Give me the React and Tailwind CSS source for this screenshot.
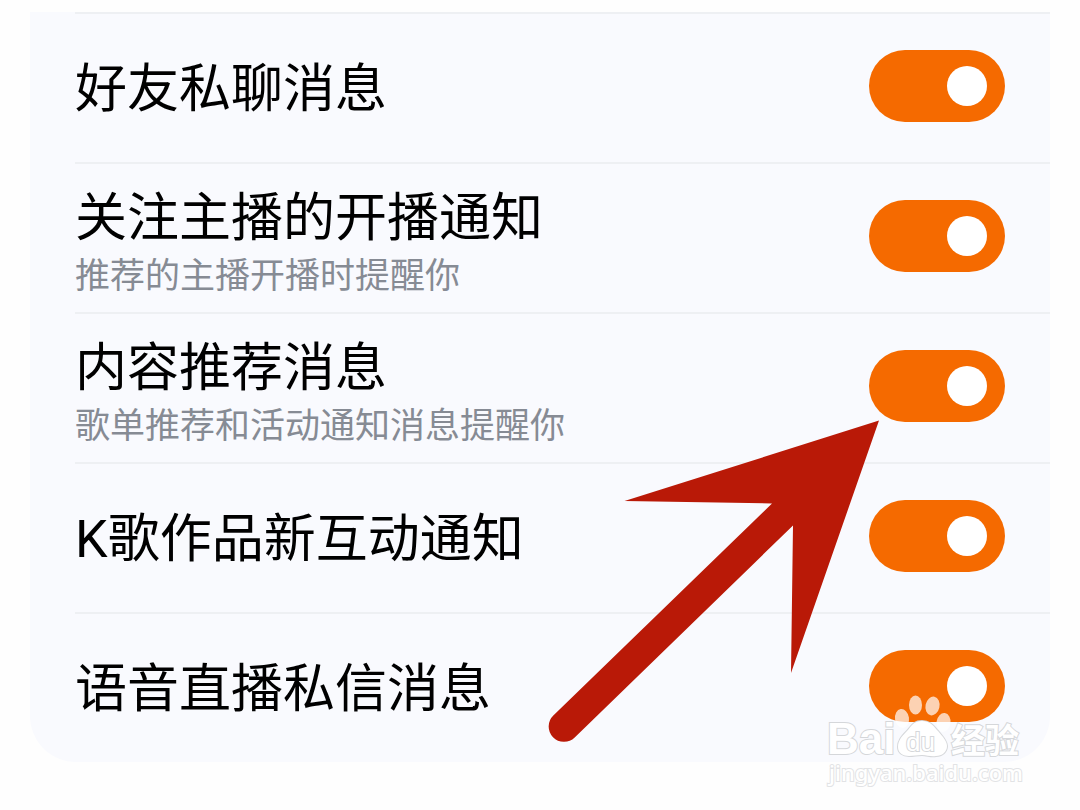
import React, { useState } from 'react';

const initialSettings = [
  { id: 'friendChat', title: '好友私聊消息', enabled: true },
  { id: 'liveStart', title: '关注主播的开播通知', description: '推荐的主播开播时提醒你', enabled: true },
  { id: 'recommend', title: '内容推荐消息', description: '歌单推荐和活动通知消息提醒你', enabled: true },
  { id: 'karaoke', title: 'K歌作品新互动通知', enabled: true },
  { id: 'voiceLive', title: '语音直播私信消息', enabled: true },
];

const SettingRow = ({ setting, onToggle }) => {
  return (
    <li className="flex min-h-[150px] items-center justify-between border-t-2 border-[#eef0f3] pr-[45px] pb-1">
      <label
        htmlFor={setting.id}
        className={setting.description ? 'flex flex-col pt-5' : 'flex flex-col pt-2'}
      >
        <span className="text-[52px] leading-[60px] text-black">{setting.title}</span>
        {setting.description && (
          <span className="mt-0.5 text-[35px] leading-[52px] text-[#868b94]">{setting.description}</span>
        )}
      </label>
      <input
        type="checkbox"
        role="switch"
        id={setting.id}
        name={setting.id}
        checked={setting.enabled}
        onChange={() => onToggle(setting.id)}
        className="flex h-[72px] w-[136px] shrink-0 cursor-pointer appearance-none items-center rounded-full bg-gray-300 px-[18px] before:size-10 before:rounded-full before:bg-white checked:justify-end checked:bg-[#f56a00]"
      />
    </li>
  );
};

const Arrow = () => (
  <svg
    className="pointer-events-none absolute top-[408px] right-[170px] h-[324px] w-[334px]"
    viewBox="546 420 334 324"
    fill="#b91907"
    aria-hidden="true"
  >
    <path d="M879 420.5 L624.5 501 L772 503.5 L553.3 715.5 A15.3 15.3 0 0 0 574.7 737.5 L793 525.5 L791 673 Z" />
  </svg>
);

const Watermark = () => (
  <svg
    className="pointer-events-none absolute -bottom-[28px] right-[24px] h-[100px] w-[202px]"
    viewBox="824 690 202 100"
    fontFamily="'Liberation Sans', 'Noto Sans CJK SC', sans-serif"
    fill="#ffffff"
    stroke="#d5d7da"
    strokeWidth="2"
    paintOrder="stroke"
  >
    <g stroke="none" fillOpacity="0.7">
      <ellipse cx="902" cy="718.5" rx="7" ry="9.5" transform="rotate(-8 902 718.5)" />
      <ellipse cx="915.5" cy="705" rx="6.5" ry="9.5" />
      <ellipse cx="932.5" cy="706" rx="7" ry="9.5" transform="rotate(12 932.5 706)" />
      <ellipse cx="943.5" cy="722.5" rx="7" ry="9.5" transform="rotate(8 943.5 722.5)" />
    </g>
    <text x="827" y="754" fontSize="44" fontWeight="700">Bai</text>
    <path d="M922 721 C913 721 911 727 907 731 C901 737 898 741 898 747 C898 753 903 756 909 756 C914 756 917 755 922 755 C927 755 931 757 936 756 C942 756 947 752 947 746 C947 741 943 737 938 731 C934 727 931 721 922 721 Z" />
    <text x="906" y="751" fontSize="26" fontWeight="400">du</text>
    <text x="951" y="753" fontSize="34" fontWeight="700">经验</text>
    <text x="829" y="781" fontSize="22" fontWeight="500" stroke="#e2e3e5" fontFamily="'Noto Sans', sans-serif">jingyan.baidu.com</text>
  </svg>
);

const App = () => {
  const [settings, setSettings] = useState(initialSettings);

  const handleToggle = (id) => {
    setSettings(prev =>
      prev.map(item => (item.id === id ? { ...item, enabled: !item.enabled } : item))
    );
  };

  return (
    <main className="min-h-screen bg-[#fefefe] px-[30px] pt-3 pb-12 font-[Roboto,'Noto_Sans_CJK_SC',sans-serif]">
      <section className="relative rounded-b-[46px] bg-[#f9fafe]">
        <ul className="ml-[45px]">
          {settings.map(setting => (
            <SettingRow key={setting.id} setting={setting} onToggle={handleToggle} />
          ))}
        </ul>
        <Arrow />
        <Watermark />
      </section>
    </main>
  );
};

export default App;
